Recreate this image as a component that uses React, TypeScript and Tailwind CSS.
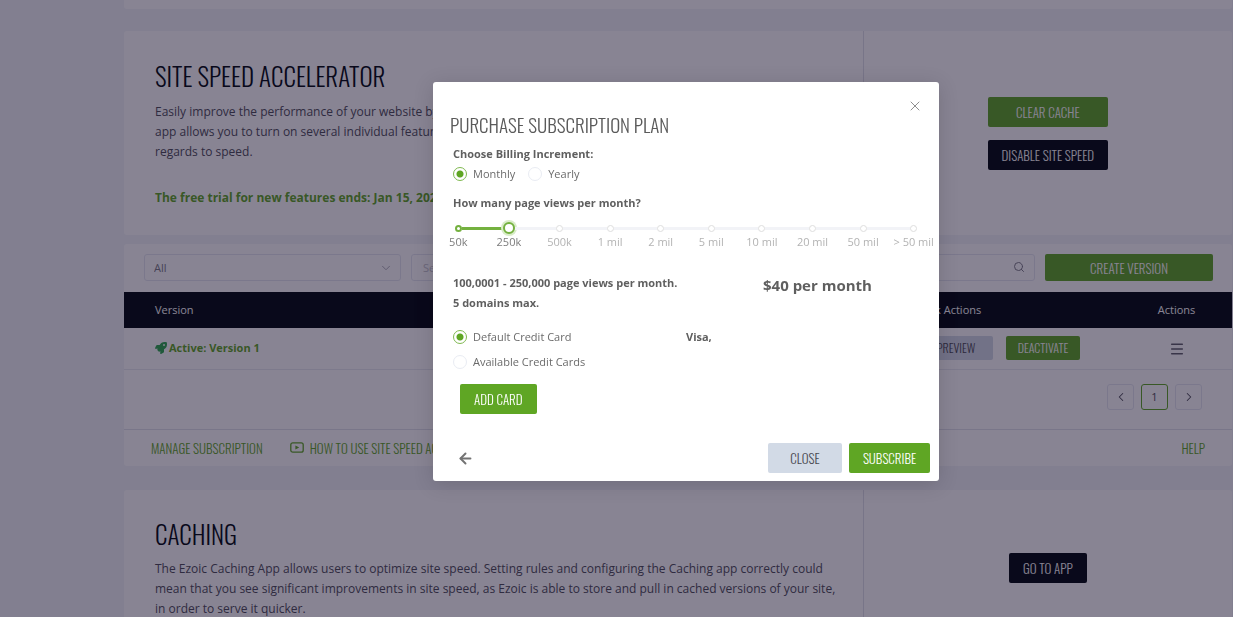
import { useState } from "react";
import { ArrowLeft, ChevronDown, ChevronLeft, ChevronRight, Menu, Search, X } from "lucide-react";
import { FaRocket } from "react-icons/fa";

const steps = ["50k", "250k", "500k", "1 mil", "2 mil", "5 mil", "10 mil", "20 mil", "50 mil", "> 50 mil"];

const oswald = "font-['Oswald','Open_Sans',sans-serif] font-light uppercase";
const green = "bg-[#5fa624] text-white";
const navy = "bg-[#00080e] text-white";
const gray = "bg-[#d2dae6] text-[#4a4a52]";

function PlayIcon() {
  return (
    <svg width="14" height="11" viewBox="0 0 14 11" fill="none" stroke="currentColor" aria-hidden="true">
      <rect x="0.8" y="0.8" width="12.4" height="9.4" rx="2" strokeWidth="1.3" />
      <path d="M5.4 3.4v4.2L9.2 5.5z" fill="currentColor" stroke="none" />
    </svg>
  );
}

function Radio({ name, label, checked, onChange }: { name: string; label: string; checked: boolean; onChange: () => void }) {
  return (
    <label className="flex items-center gap-[6px] text-[11px] leading-4 text-[#6b6b6b]">
      <input
        type="radio"
        name={name}
        checked={checked}
        onChange={onChange}
        className="size-[14px] shrink-0 appearance-none rounded-full border border-[#e9ecf3] bg-white checked:border-[#7fb950] checked:bg-[radial-gradient(circle,#5fa624_3px,transparent_4px)]"
      />
      {label}
    </label>
  );
}

function PageViewSlider() {
  const [value, setValue] = useState(1);

  return (
    <div className="relative mt-[9px] grid grid-cols-10 has-focus-visible:outline">
      {steps.map((step, i) => (
        <div key={step} className="flex flex-col items-center">
          <div className="flex h-4 w-full items-center">
            <span className={`h-[3px] flex-1 ${i === 0 ? "" : i <= value ? "bg-[#74b13f]" : "bg-[#f2f3f7]"}`} />
            {i === value ? (
              <span className="size-3 rounded-full border-2 border-[#74b13f] bg-white shadow-[0_0_0_2px_#d9ecc8]" />
            ) : (
              <span
                className={`size-[7px] rounded-full bg-white ${i < value ? "border-2 border-[#74b13f]" : "border border-[#dedede]"}`}
              />
            )}
            <span
              className={`h-[3px] flex-1 ${i === steps.length - 1 ? "" : i < value ? "bg-[#74b13f]" : "bg-[#f2f3f7]"}`}
            />
          </div>
          <span className={`text-[11px] leading-3 whitespace-nowrap ${i <= value ? "text-[#7d7d7d]" : "text-[#b3b3b3]"}`}>
            {step}
          </span>
        </div>
      ))}
      <input
        type="range"
        aria-label="Page views per month"
        min={0}
        max={steps.length - 1}
        value={value}
        onChange={(e) => setValue(Number(e.target.value))}
        className="absolute inset-x-4 top-0 h-4 cursor-pointer opacity-0"
      />
    </div>
  );
}

function PurchaseModal() {
  const [billing, setBilling] = useState("Monthly");
  const [card, setCard] = useState("Default Credit Card");

  return (
    <div className="fixed inset-0 flex items-start justify-center bg-[rgba(17,10,40,0.5)] pt-[82px] pl-[139px]">
      <div
        role="dialog"
        aria-modal="true"
        aria-labelledby="plan-title"
        className="w-full max-w-[506px] rounded-[3px] bg-white pb-2 text-[#5f5f5f] shadow-[0_3px_20px_rgba(0,0,0,0.15)]"
      >
        <div className="flex justify-end px-4 pt-4">
          <button type="button" aria-label="Close dialog" className="flex size-4 items-center justify-center text-[#8f8f8f]">
            <X size={16} strokeWidth={1.5} />
          </button>
        </div>
        <h2 id="plan-title" className={`px-[17px] text-[19px] leading-5 text-[#5a5a5a] ${oswald}`}>
          Purchase Subscription Plan
        </h2>

        <fieldset className="mt-3 px-5">
          <legend className="text-[11px] leading-4 font-bold">Choose Billing Increment:</legend>
          <div className="mt-1 flex gap-[13px]">
            {["Monthly", "Yearly"].map((b) => (
              <Radio key={b} name="billing" label={b} checked={billing === b} onChange={() => setBilling(b)} />
            ))}
          </div>
        </fieldset>

        <p className="mt-[13px] px-5 text-[11px] leading-4 font-bold">How many page views per month?</p>
        <PageViewSlider />

        <div className="mt-[25px] grid grid-cols-2 px-5">
          <p className="text-[11px] leading-5 font-bold">
            100,0001 - 250,000 page views per month.
            <br />5 domains max.
          </p>
          <p className="pl-[77px] text-[15px] leading-6 font-bold">$40 per month</p>
        </div>

        <div className="mt-4 grid grid-cols-2 px-5">
          <fieldset className="flex flex-col gap-[9px]">
            {["Default Credit Card", "Available Credit Cards"].map((c) => (
              <Radio key={c} name="card" label={c} checked={card === c} onChange={() => setCard(c)} />
            ))}
          </fieldset>
          <p className="text-[11px] leading-4 font-bold">Visa,</p>
        </div>

        <button type="button" className={`mt-[14px] ml-[27px] h-[30px] rounded-[2px] px-[14px] text-[13px] ${green} ${oswald}`}>
          Add Card
        </button>

        <div className="mt-[29px] flex items-center gap-[7px] pr-[9px] pl-6">
          <button type="button" aria-label="Back" className="mr-auto text-[#737373]">
            <ArrowLeft size={17} strokeWidth={2.75} />
          </button>
          <button type="button" className={`h-[30px] w-[74px] rounded-[2px] text-[13px] ${gray} ${oswald}`}>
            Close
          </button>
          <button type="button" className={`h-[30px] w-[81px] rounded-[2px] text-[13px] ${green} ${oswald}`}>
            Subscribe
          </button>
        </div>
      </div>
    </div>
  );
}

export default function App() {
  return (
    <div className="h-screen overflow-hidden bg-[#f2f5f8] pr-px pl-[124px] font-['Open_Sans','Noto_Sans',sans-serif] text-[12px] leading-5 text-[#4d4d58]">
      <div className="h-[9px] rounded-b-[3px] bg-white" />

      {/* Site speed */}
      <section className="mt-[22px] flex rounded-[3px] bg-white">
        <div className="w-2/3 px-[31px] pt-[27px] pb-[27px]">
          <h1 className={`text-[25px] leading-[36px] text-[#00080e] ${oswald}`}>Site Speed Accelerator</h1>
          <p className="mt-2">
            Easily improve the performance of your website by
            <br />
            app allows you to turn on several individual features
            <br />
            regards to speed.
          </p>
          <p className="mt-[26px] font-bold text-[#5fa624]">The free trial for new features ends: Jan 15, 2020</p>
        </div>
        <div className="flex w-1/3 flex-col items-center border-l border-[#dfe1e8] pt-[66px]">
          <div className="flex flex-col gap-[13px]">
            <button type="button" className={`h-[30px] rounded-[2px] px-[14px] text-[13px] ${green} ${oswald}`}>
              Clear Cache
            </button>
            <button type="button" className={`h-[30px] rounded-[2px] px-[14px] text-[13px] ${navy} ${oswald}`}>
              Disable Site Speed
            </button>
          </div>
        </div>
      </section>

      {/* Versions */}
      <section className="mt-[9px] rounded-[3px] bg-white">
        <div className="flex gap-[10px] pt-[10px] pr-[19px] pb-[11px] pl-5 text-[11px]">
          <div className="relative w-[257px]">
            <select
              aria-label="Filter versions"
              className="h-[27px] w-full appearance-none rounded-[3px] border border-[#e4e7f0] bg-white px-[9px] text-[#7a7a85]"
            >
              <option>All</option>
            </select>
            <ChevronDown size={14} strokeWidth={1.5} className="pointer-events-none absolute top-[7px] right-2 text-[#a4a4ae]" />
          </div>
          <div className="relative flex-1">
            <input
              type="search"
              aria-label="Search versions"
              placeholder="Search"
              className="h-[27px] w-full rounded-[3px] border border-[#e4e7f0] bg-white px-[11px] placeholder:text-[#c4c4cc]"
            />
            <Search size={12} className="absolute top-[7px] right-[10px] text-[#7d7d88]" />
          </div>
          <button type="button" className={`h-[27px] w-[168px] rounded-[2px] text-[13px] ${green} ${oswald}`}>
            Create Version
          </button>
        </div>

        <table className="w-full table-fixed border-collapse text-[11px]">
          <thead>
            <tr className={`h-9 ${navy}`}>
              <th className="w-[283px] pl-[31px] text-left font-medium">Version</th>
              <th />
              <th className="w-[362px] pl-[13px] font-medium">Quick Actions</th>
              <th className="w-[111px] font-medium">Actions</th>
            </tr>
          </thead>
          <tbody>
            <tr className="h-[41px] border-b border-[#e8eaf0]">
              <td className="pl-[31px] font-bold text-[#5fa624]">
                <span className="flex items-center gap-[2px]">
                  <FaRocket size={12} className="text-[#2fa84f]" />
                  Active: Version 1
                </span>
              </td>
              <td />
              <td>
                <div className="flex justify-end gap-[13px] pr-[41px]">
                  <button type="button" className={`h-6 w-[74px] rounded-[2px] text-[12px] ${gray} ${oswald}`}>
                    Preview
                  </button>
                  <button type="button" className={`h-6 w-[74px] rounded-[2px] text-[12px] ${green} ${oswald}`}>
                    Deactivate
                  </button>
                </div>
              </td>
              <td className="text-center">
                <button type="button" aria-label="Version actions" className="align-middle text-[#60606a]">
                  <Menu size={16} strokeWidth={2.25} />
                </button>
              </td>
            </tr>
          </tbody>
        </table>

        <nav aria-label="Pagination" className="flex justify-end gap-[7px] pt-[14px] pr-[30px] pb-[19px]">
          <button type="button" aria-label="Previous page" className="flex h-[26px] w-[27px] items-center justify-center rounded-[3px] border border-[#e4e7f0]">
            <ChevronLeft size={14} strokeWidth={1.75} />
          </button>
          <button type="button" aria-current="page" className="h-[26px] w-[27px] rounded-[3px] border border-[#5fa624] text-[11px]">
            1
          </button>
          <button type="button" aria-label="Next page" className="flex h-[26px] w-[27px] items-center justify-center rounded-[3px] border border-[#e4e7f0]">
            <ChevronRight size={14} strokeWidth={1.75} />
          </button>
        </nav>

        <footer className={`flex h-[37px] items-center gap-[27px] border-t border-[#e0e2ea] px-[27px] text-[13px] text-[#5fa624] ${oswald}`}>
          <a href="#subscription">Manage Subscription</a>
          <a href="#how-to" className="flex items-center gap-[6px]">
            <PlayIcon />
            How to use Site Speed Accelerator
          </a>
          <a href="#help" className="ml-auto">
            Help
          </a>
        </footer>
      </section>

      {/* Caching */}
      <section className="mt-6 flex rounded-[3px] bg-white">
        <div className="w-2/3 pt-[26px] pb-[28px] pl-[31px]">
          <h1 className={`text-[25px] leading-[36px] text-[#00080e] ${oswald}`}>Caching</h1>
          <p className="mt-[7px]">
            The Ezoic Caching App allows users to optimize site speed. Setting rules and configuring the Caching app correctly could
            <br />
            mean that you see significant improvements in site speed, as Ezoic is able to store and pull in cached versions of your site,
            <br />
            in order to serve it quicker.
          </p>
        </div>
        <div className="flex w-1/3 items-center justify-center border-l border-[#dfe1e8]">
          <button type="button" className={`h-[30px] rounded-[2px] px-[14px] text-[13px] ${navy} ${oswald}`}>
            Go to App
          </button>
        </div>
      </section>

      <PurchaseModal />
    </div>
  );
}
